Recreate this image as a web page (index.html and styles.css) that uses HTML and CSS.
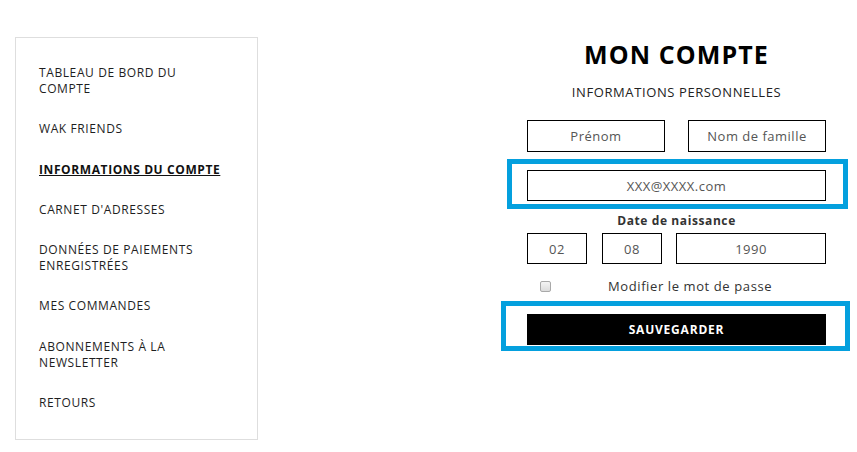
FILE: index.html
```html
<!DOCTYPE html>
<html lang="fr">
<head>
<meta charset="utf-8">
<title>Mon compte</title>
<link rel="stylesheet" href="styles.css">
</head>
<body>
<div class="page">
  <nav class="sidebar">
    <a class="nav-link" href="#">Tableau de bord du compte</a>
    <a class="nav-link" href="#">Wak Friends</a>
    <a class="nav-link active" href="#">Informations du compte</a>
    <a class="nav-link" href="#">Carnet d'adresses</a>
    <a class="nav-link" href="#">Données de paiements enregistrées</a>
    <a class="nav-link" href="#">Mes commandes</a>
    <a class="nav-link" href="#">Abonnements à la newsletter</a>
    <a class="nav-link" href="#">Retours</a>
  </nav>
  <main class="account">
    <h1 class="title">MON COMPTE</h1>
    <h2 class="subtitle">INFORMATIONS PERSONNELLES</h2>
    <form class="form">
      <div class="row-names">
        <input class="field field-name" type="text" placeholder="Prénom">
        <input class="field field-name" type="text" placeholder="Nom de famille">
      </div>
      <div class="highlight highlight-email">
        <input class="field" type="email" value="XXX@XXXX.com">
      </div>
      <div class="label">Date de naissance</div>
      <div class="row-date">
        <input class="field field-day" type="text" value="02">
        <input class="field field-day" type="text" value="08">
        <input class="field field-year" type="text" value="1990">
      </div>
      <label class="row-check">
        <input class="check" type="checkbox">
        <span class="check-text">Modifier le mot de passe</span>
      </label>
      <div class="highlight highlight-button">
        <button class="submit" type="button">SAUVEGARDER</button>
      </div>
    </form>
  </main>
</div>
</body>
</html>
```

FILE: styles.css
```css
body {
  margin: 0;
  background: #fff;
  color: #222;
  font-family: "Open Sans", "DejaVu Sans", sans-serif;
}

.page {
  display: flex;
  align-items: flex-start;
  padding-left: 15px;
}

.sidebar {
  margin-top: 37px;
  width: 243px;
  box-sizing: border-box;
  border: 1px solid #dedede;
  padding: 27px 32px 28px 23px;
  display: flex;
  flex-direction: column;
  gap: 24.3px;
}

.nav-link {
  font-size: 12px;
  line-height: 16px;
  letter-spacing: 0.6px;
  text-transform: uppercase;
  color: #1e1e1e;
  text-decoration: none;
}

.nav-link.active {
  font-weight: 700;
  text-decoration: underline;
  color: #111;
}

.account {
  margin-left: 269px;
  width: 299px;
  padding-top: 39px;
  text-align: center;
}

.title {
  margin: 0;
  font-size: 25px;
  line-height: 30px;
  font-weight: 700;
  letter-spacing: 1.1px;
  color: #000;
}

.subtitle {
  margin: 14px 0 0;
  font-size: 13px;
  line-height: 18px;
  font-weight: 400;
  letter-spacing: 0.6px;
  color: #222;
}

.form {
  margin-top: 19px;
  display: flex;
  flex-direction: column;
}

.field {
  display: block;
  box-sizing: border-box;
  width: 100%;
  height: 31px;
  margin: 0;
  padding: 0;
  border: 1px solid #000;
  border-radius: 0;
  background: #fff;
  font-family: "Open Sans", "DejaVu Sans", sans-serif;
  font-size: 13px;
  letter-spacing: 0.5px;
  color: #555;
  text-align: center;
  outline: none;
}

.field::placeholder {
  color: #555;
  opacity: 1;
}

.row-names {
  display: flex;
  gap: 23px;
}

.field-name {
  width: 138px;
  height: 32px;
}

.highlight {
  position: relative;
}

.highlight::after {
  content: "";
  position: absolute;
  border: 5px solid #04a0de;
  pointer-events: none;
}

.highlight-email {
  margin-top: 18px;
}

.highlight-email::after {
  top: -11px;
  right: -22px;
  bottom: -8px;
  left: -20px;
}

.label {
  margin-top: 12px;
  font-size: 12px;
  line-height: 16px;
  font-weight: 700;
  letter-spacing: 0.6px;
  color: #333;
}

.row-date {
  margin-top: 4px;
  display: flex;
  gap: 15px;
}

.field-day {
  width: 60px;
}

.field-year {
  width: 150px;
  margin-left: -1px;
}

.row-check {
  margin-top: 13px;
  height: 18px;
  display: flex;
  align-items: center;
}

.check {
  appearance: none;
  -webkit-appearance: none;
  width: 11px;
  height: 11px;
  margin: 0 0 0 13px;
  border: 1px solid #a9a9a9;
  border-radius: 2px;
  background: linear-gradient(#f4f4f4, #dcdcdc);
  box-sizing: border-box;
}

.check-text {
  margin-left: 57px;
  font-size: 13px;
  line-height: 18px;
  letter-spacing: 0.6px;
  color: #333;
}

.highlight-button {
  margin-top: 19px;
}

.highlight-button::after {
  top: -13px;
  right: -24px;
  bottom: -6px;
  left: -26px;
}

.submit {
  display: block;
  width: 100%;
  height: 31px;
  margin: 0;
  padding: 0;
  border: none;
  border-radius: 0;
  background: #000;
  color: #fff;
  font-family: "Open Sans", "DejaVu Sans", sans-serif;
  font-size: 12px;
  font-weight: 700;
  letter-spacing: 0.8px;
  cursor: pointer;
}
```
